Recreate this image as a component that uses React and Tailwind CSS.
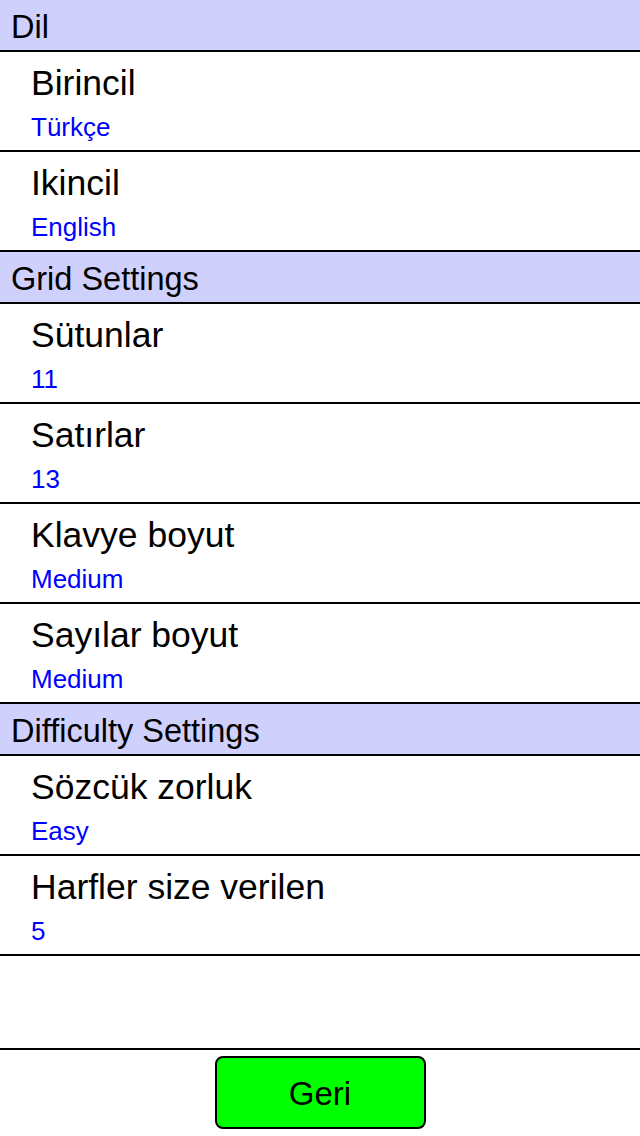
import React from "react";

const sections = [
  {
    title: "Dil",
    rows: [
      { label: "Birincil", value: "Türkçe" },
      { label: "Ikincil", value: "English" },
    ],
  },
  {
    title: "Grid Settings",
    rows: [
      { label: "Sütunlar", value: "11" },
      { label: "Satırlar", value: "13" },
      { label: "Klavye boyut", value: "Medium" },
      { label: "Sayılar boyut", value: "Medium" },
    ],
  },
  {
    title: "Difficulty Settings",
    rows: [
      { label: "Sözcük zorluk", value: "Easy" },
      { label: "Harfler size verilen", value: "5" },
    ],
  },
];

const SectionHeader = ({ title }) => (
  <div className="h-[52px] border-b-2 border-black bg-[#d0d0fd] pl-[11px] pt-[2px] text-[32.5px] leading-[50px] text-black">
    {title}
  </div>
);

const SettingRow = ({ label, value }) => (
  <div className="h-[100px] border-b-2 border-black pl-[31px] pt-[11px]">
    <p className="text-[35.5px] leading-[40px] text-black">{label}</p>
    <p className="mt-[9px] text-[26px] leading-[30px] text-[#0000ff]">
      {value}
    </p>
  </div>
);

const App = () => {
  return (
    <div
      className="flex h-[1136px] w-[640px] flex-col bg-white"
      style={{ fontFamily: '"Liberation Sans", Arial, sans-serif' }}
    >
      <div className="flex-1 border-b-2 border-black">
        {sections.map((section) => (
          <React.Fragment key={section.title}>
            <SectionHeader title={section.title} />
            {section.rows.map((row) => (
              <SettingRow key={row.label} label={row.label} value={row.value} />
            ))}
          </React.Fragment>
        ))}
      </div>
      <div className="flex h-[86px] justify-center pt-[6px]">
        <button className="h-[73px] w-[211px] rounded-[8px] border-2 border-black bg-[#00ff00] pt-[3px] text-[33px] text-black">
          Geri
        </button>
      </div>
    </div>
  );
};

export default App;
